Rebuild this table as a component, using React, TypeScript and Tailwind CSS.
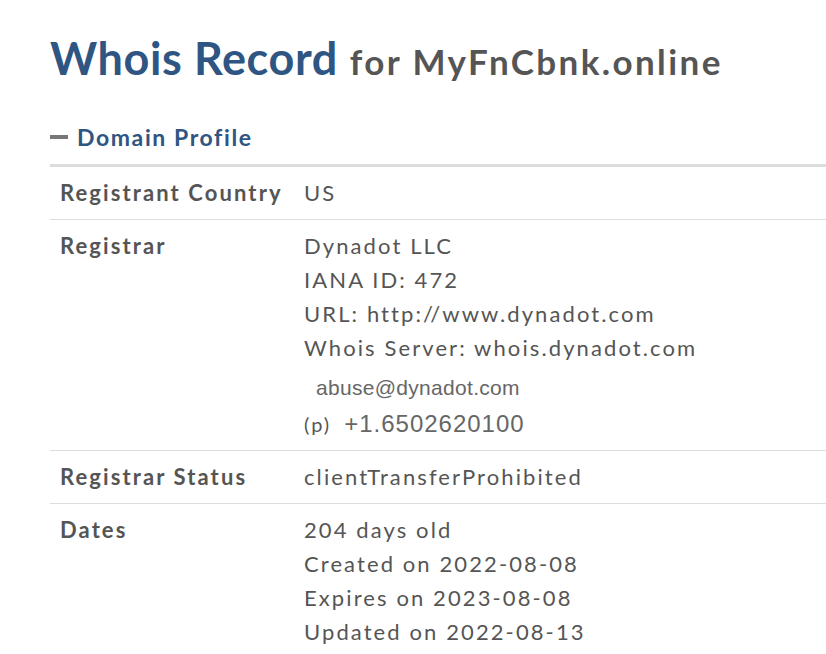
function Row({ label, last, children }: { label: string; last?: boolean; children: React.ReactNode }) {
  return (
    <div className={"flex py-[9px] " + (last ? "" : "border-b border-[#dddddd]")}>
      <div className="w-[254px] shrink-0 pl-[10px] text-[22px] font-bold leading-[34px] tracking-[2.1px] text-[#555555]">
        {label}
      </div>
      <div className="text-[22px] leading-[34px] tracking-[2.1px] text-[#555555]">{children}</div>
    </div>
  );
}

export default function App() {
  return (
    <div
      className="min-h-[654px] bg-white pl-[50px] pt-[28px]"
      style={{ fontFamily: "Lato, 'Open Sans', sans-serif" }}
    >
      <h1 className="flex items-baseline gap-[12px] whitespace-nowrap font-bold leading-[60px]">
        <span className="text-[45px] tracking-[0.6px] text-[#2f5583]">Whois Record</span>
        <span className="text-[35px] tracking-[2.4px] text-[#555555]">for MyFnCbnk.online</span>
      </h1>

      <div className="mt-[29px] flex items-center gap-[9px] border-b-[3px] border-[#dddddd] pb-[10px]">
        <span className="h-[4px] w-[18px] bg-[#777777]" />
        <span className="text-[23px] font-bold leading-[34px] tracking-[1.6px] text-[#2f5583]">
          Domain Profile
        </span>
      </div>

      <Row label="Registrant Country">US</Row>

      <Row label="Registrar">
        <div>Dynadot LLC</div>
        <div>IANA ID: 472</div>
        <div>URL: http://www.dynadot.com</div>
        <div>Whois Server: whois.dynadot.com</div>
        <div
          className="mt-[6px] pl-[12px] text-[21px] leading-[34px] tracking-[0.3px] text-[#666666]"
          style={{ fontFamily: "'Liberation Sans', Arial, sans-serif" }}
        >
          abuse@dynadot.com
        </div>
        <div className="mt-[2px] flex items-center gap-[13px]">
          <span className="text-[20px] tracking-[2px]">(p)</span>
          <span
            className="text-[24px] tracking-[1px] text-[#666666]"
            style={{ fontFamily: "'Liberation Sans', Arial, sans-serif" }}
          >
            +1.6502620100
          </span>
        </div>
      </Row>

      <Row label="Registrar Status">clientTransferProhibited</Row>

      <Row label="Dates" last>
        <div>204 days old</div>
        <div>Created on 2022-08-08</div>
        <div>Expires on 2023-08-08</div>
        <div>Updated on 2022-08-13</div>
      </Row>
    </div>
  );
}
